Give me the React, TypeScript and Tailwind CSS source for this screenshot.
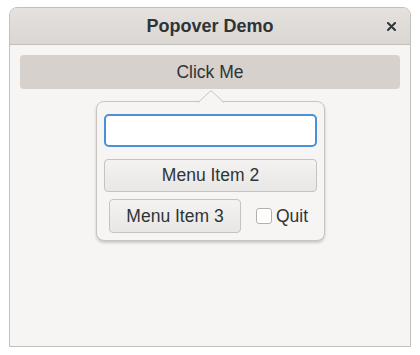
import React from "react";

const font = { fontFamily: '"Liberation Sans", Arial, sans-serif' };

export default function App() {
  return (
    <div className="w-[420px] h-[355px] bg-white pt-[7px] pl-[9px]" style={font}>
      <div className="relative w-[402px] h-[340px] rounded-t-[8px] border border-[#c3bfbb] bg-[#f6f5f4] overflow-hidden">
        {/* header bar */}
        <div className="flex items-center justify-center h-[37px] bg-gradient-to-b from-[#e4e1de] to-[#dbd7d3] border-b border-[#c3bfbb] relative">
          <span className="text-[18px] font-bold text-[#2e3436]">Popover Demo</span>
          <span className="absolute right-[14px] top-[14px]">
            <svg width="9" height="9" viewBox="0 0 9 9">
              <path d="M1 1 L8 8 M8 1 L1 8" stroke="#2e3436" strokeWidth="2" strokeLinecap="round" />
            </svg>
          </span>
        </div>

        <div className="px-[10px] pt-[10px]">
          <button className="w-full h-[34px] rounded-[4px] bg-[#d6d1cd] text-[17.5px] text-[#2e3436] flex items-center justify-center">
            Click Me
          </button>
        </div>

        {/* popover */}
        <div className="absolute left-[86px] top-[93px] w-[229px] h-[140px] rounded-[8px] border border-[#c8c4c0] bg-[#f6f5f4] shadow-[0_2px_3px_rgba(0,0,0,0.18)] px-[7px] pt-[12px]">
          <svg className="absolute left-[101px] top-[-12px]" width="26" height="13" viewBox="0 0 26 13">
            <path d="M0 12.5 L13 0.5 L26 12.5" fill="#f6f5f4" stroke="#c8c4c0" strokeWidth="1" />
          </svg>
          <div className="h-[33px] rounded-[5px] border-2 border-[#4a90d9] bg-white" />
          <button className="mt-[12px] w-full h-[33px] rounded-[4px] border border-[#c7c2be] bg-gradient-to-b from-[#f4f3f2] to-[#e9e7e5] text-[17.5px] text-[#2e3436] flex items-center justify-center">
            Menu Item 2
          </button>
          <div className="mt-[7px] flex items-center pl-[5px]">
            <button className="w-[132px] h-[34px] rounded-[4px] border border-[#c7c2be] bg-gradient-to-b from-[#f4f3f2] to-[#e9e7e5] text-[17.5px] text-[#2e3436] flex items-center justify-center">
              Menu Item 3
            </button>
            <span className="ml-[15px] w-[16px] h-[16px] rounded-[3px] border border-[#b6b0ab] bg-white" />
            <span className="ml-[4px] text-[17.5px] text-[#2e3436]">Quit</span>
          </div>
        </div>
      </div>
    </div>
  );
}
